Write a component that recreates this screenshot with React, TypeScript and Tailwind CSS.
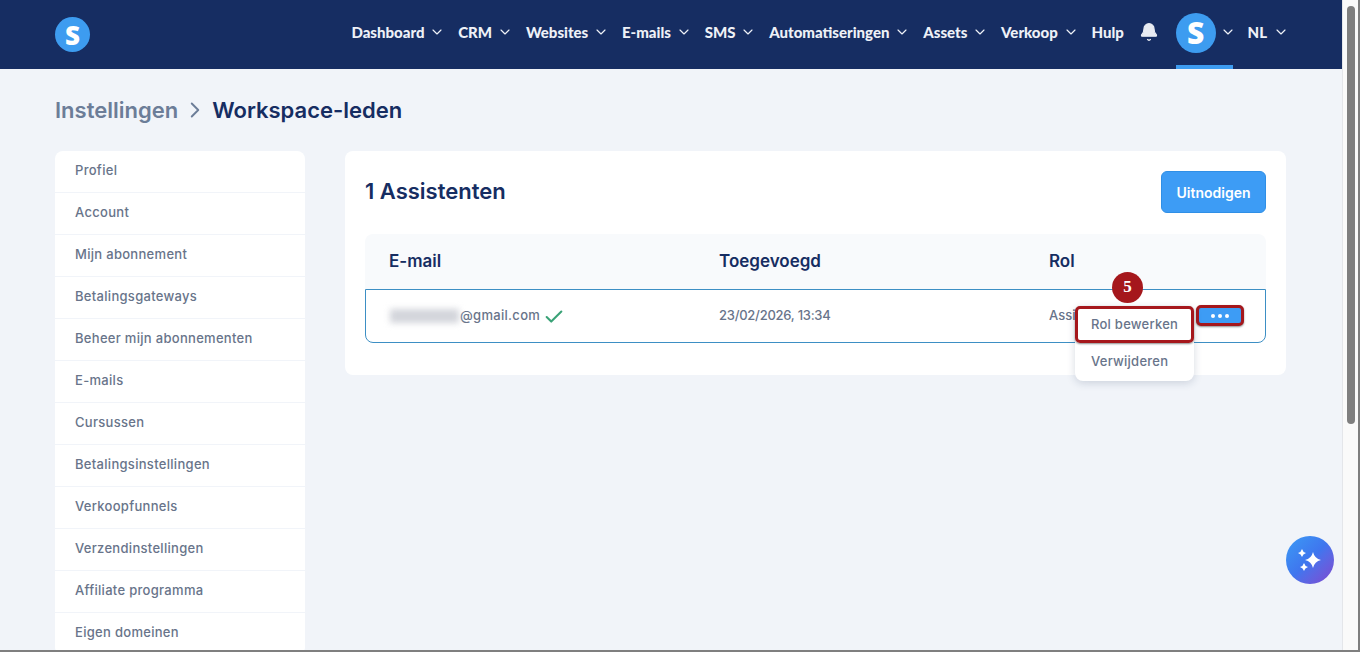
import { Bell, ChevronDown, ChevronRight, Check } from "lucide-react";

const navItems = [
  { label: "Dashboard", chevron: true },
  { label: "CRM", chevron: true },
  { label: "Websites", chevron: true },
  { label: "E-mails", chevron: true },
  { label: "SMS", chevron: true },
  { label: "Automatiseringen", chevron: true },
  { label: "Assets", chevron: true },
  { label: "Verkoop", chevron: true },
  { label: "Hulp", chevron: false },
];

const sideItems = [
  "Profiel",
  "Account",
  "Mijn abonnement",
  "Betalingsgateways",
  "Beheer mijn abonnementen",
  "E-mails",
  "Cursussen",
  "Betalingsinstellingen",
  "Verkoopfunnels",
  "Verzendinstellingen",
  "Affiliate programma",
  "Eigen domeinen",
];

function Logo({ size }: { size: "sm" | "lg" }) {
  return (
    <div
      className={
        size === "sm"
          ? "flex h-[35px] w-[35px] items-center justify-center rounded-full bg-[#3d9cf0] text-[26px] font-black leading-none text-white"
          : "flex h-10 w-10 items-center justify-center rounded-full bg-[#3d9cf0] text-[30px] font-black leading-none text-white"
      }
      style={{ fontFamily: "'Open Sans', sans-serif" }}
    >
      S
    </div>
  );
}

function Sparkles() {
  return (
    <svg viewBox="0 0 48 48" className="h-12 w-12" fill="#fff">
      <path d="M27 16 Q28.500 22.500 35 24 Q28.500 25.500 27 32 Q25.500 25.500 19 24 Q25.500 22.500 27 16 Z" />
      <path d="M16 13 Q16.800 16.200 20 17 Q16.800 17.800 16 21 Q15.200 17.800 12 17 Q15.200 16.200 16 13 Z" />
      <path d="M18 27 Q18.800 30.200 22 31 Q18.800 31.800 18 35 Q17.200 31.800 14 31 Q17.200 30.200 18 27 Z" />
    </svg>
  );
}

export default function App() {
  return (
    <div className="flex h-[652px] w-[1360px] flex-col overflow-hidden bg-[#f1f4f9] font-['Inter',sans-serif]">
      <div className="flex h-[650px] shrink-0">
        <div className="flex w-[1342px] flex-col overflow-hidden">
          <header className="flex h-[69px] shrink-0 items-center justify-between bg-[#162d62] pl-[55px] pr-[53px] text-white">
            <Logo size="sm" />
            <nav className="flex h-full items-center font-['Lato',sans-serif] text-[15px] font-black text-[#eef1f7]">
              {navItems.map((item) => (
                <div key={item.label} className="mr-[12.75px] flex items-center gap-[5px] pb-[5px]">
                  <span>{item.label}</span>
                  {item.chevron && <ChevronDown size={16} strokeWidth={1.75} />}
                </div>
              ))}
              <Bell size={20} fill="#e8ebf2" strokeWidth={1.5} className="ml-[2px] mr-[17px] mb-[5px] text-[#e8ebf2]" />
              <div className="relative mr-[4px] flex h-full items-center pb-[3px]">
                <Logo size="lg" />
                <div className="absolute bottom-0 left-0 h-1 w-[57px] bg-[#3d9cf0]" />
              </div>
              <ChevronDown size={16} strokeWidth={1.75} className="mr-[12px] mb-[5px]" />
              <div className="flex items-center gap-[6px] pb-[5px]">
                <span>NL</span>
                <ChevronDown size={16} strokeWidth={1.75} />
              </div>
            </nav>
          </header>

          <main className="relative flex-1 px-[55px]">
            <div className="flex h-[82px] items-center text-[22px] font-semibold">
              <span className="text-[#6c7d98]">Instellingen</span>
              <ChevronRight size={26} strokeWidth={1.75} className="mx-[4px] text-[#6c7d98]" />
              <span className="text-[#162d62]">Workspace-leden</span>
            </div>

            <div className="flex items-start gap-10">
              <aside className="w-[250px] shrink-0 overflow-hidden rounded-lg bg-white">
                {sideItems.map((item) => (
                  <div
                    key={item}
                    className="flex h-[42px] items-center border-b border-[#f1f4f9] px-5 pb-[1px] text-[13px] font-medium tracking-[0.3px] text-[#68748a]"
                  >
                    {item}
                  </div>
                ))}
              </aside>

              <section className="w-[941px] rounded-lg bg-white px-5 pb-[32px] pt-5">
                <div className="flex items-center justify-between">
                  <h1 className="pb-[2px] text-[22px] font-semibold text-[#162d62]">1 Assistenten</h1>
                  <button className="h-[42px] w-[105px] rounded-md border border-[#2f8fe6] bg-[#3d9cf5] text-[14px] font-semibold text-white">
                    Uitnodigen
                  </button>
                </div>

                <div className="mt-[21px] grid h-[55px] grid-cols-[330px_330px_1fr] items-center rounded-t-lg bg-[#f8fafc] pl-6 text-[17px] font-semibold text-[#162d62]">
                  <span>E-mail</span>
                  <span>Toegevoegd</span>
                  <span>Rol</span>
                </div>

                <div className="relative grid h-[54px] grid-cols-[330px_330px_1fr] items-center rounded-b-lg border border-[#3d8fc4] pl-[23px] text-[13px] font-medium text-[#68748a]">
                  <div className="flex items-center">
                    <span className="mx-[1px] h-[14px] w-[69px] bg-[#d3d5db] blur-[3px]" />
                    <span className="tracking-[0.3px]">@gmail.com</span>
                    <Check size={22} strokeWidth={2.25} className="ml-[3px] mt-[1px] text-[#3aa277]" />
                  </div>
                  <span className="tracking-[-0.25px]">23/02/2026, 13:34</span>
                  <span>Assistent</span>

                  <button className="absolute left-[830px] top-[15px] flex h-[21px] w-[48px] items-center justify-center gap-[3px] rounded-[5px] border-[3px] border-[#a5171c] bg-[#3d9cf5] shadow-[0_1px_2px_rgba(0,0,0,0.45)]">
                    <span className="h-1 w-1 rounded-full bg-white" />
                    <span className="h-1 w-1 rounded-full bg-white" />
                    <span className="h-1 w-1 rounded-full bg-white" />
                  </button>

                  <div className="absolute left-[709px] top-[16px] w-[119px] rounded-lg bg-white text-[13px] font-medium tracking-[0.25px] text-[#68748a] shadow-[0_2px_8px_rgba(30,50,90,0.18)]">
                    <div className="flex h-[37px] items-center rounded-[5px] border-[3px] border-[#a5171c] pl-[13px] shadow-[0_1px_2px_rgba(0,0,0,0.45)]">
                      Rol bewerken
                    </div>
                    <div className="flex h-[38px] items-center pl-4">Verwijderen</div>
                  </div>

                  <div className="absolute left-[746px] top-[-18px] flex h-[31px] w-[31px] items-center justify-center rounded-full bg-[#a5171c] pb-[1px] font-['Liberation_Serif',serif] text-[17px] font-bold text-white">
                    5
                  </div>
                </div>
              </section>
            </div>

            <div className="absolute left-[1286px] top-[467px] flex h-12 w-12 items-center justify-center rounded-full bg-gradient-to-br from-[#3b9bf5] via-[#3f75ee] to-[#7a45cf]">
              <Sparkles />
            </div>
          </main>
        </div>

        <div className="flex w-4 shrink-0 justify-center border-l border-[#e4e6ea] bg-[#fafafa] pt-[6px]">
          <div className="h-[418px] w-2 rounded-full bg-[#7f7f7f]" />
        </div>
        <div className="w-[2px] shrink-0 bg-[#7f7f7f]" />
      </div>
      <div className="h-[2px] shrink-0 bg-[#7f7f7f]" />
    </div>
  );
}
